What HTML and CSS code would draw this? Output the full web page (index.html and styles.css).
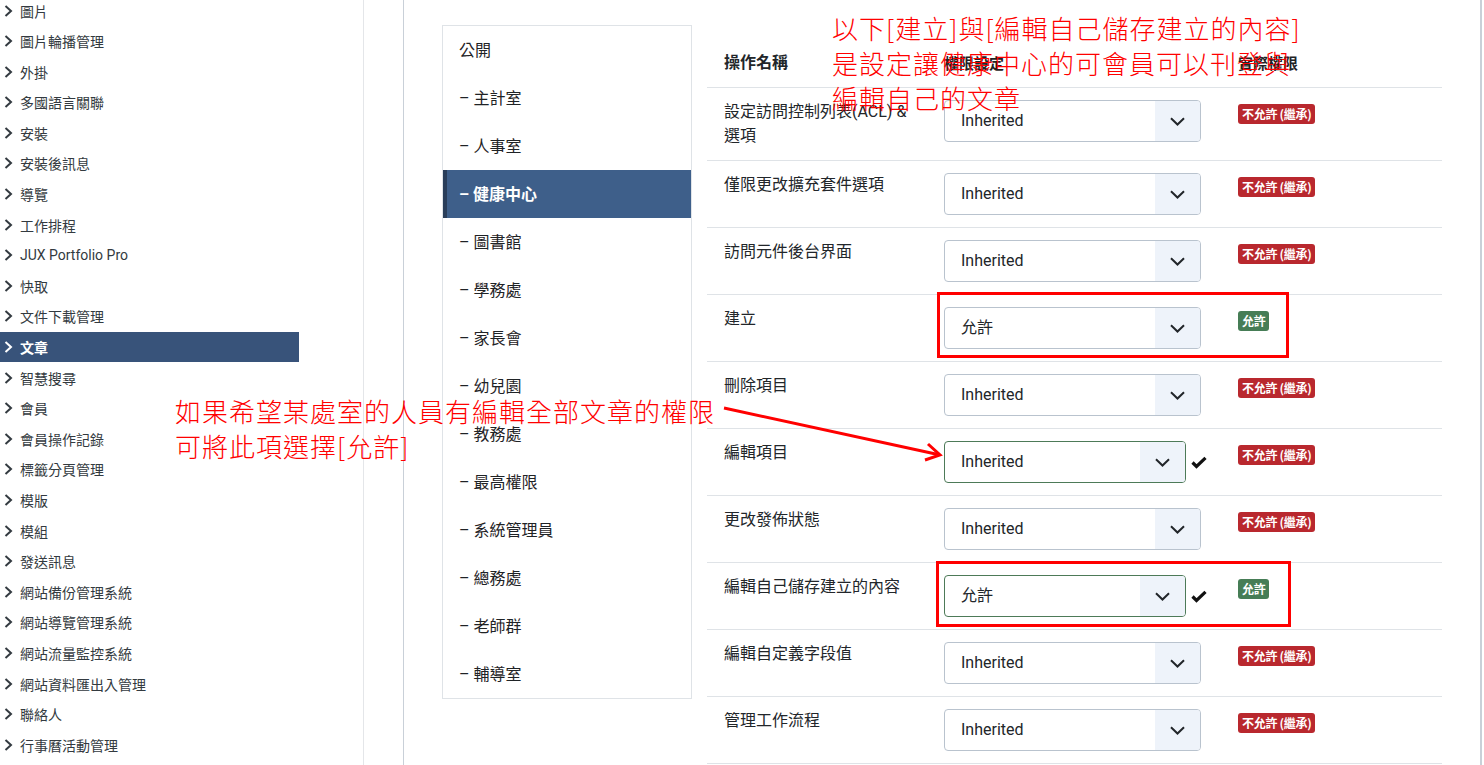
FILE: index.html
```html
<!DOCTYPE html>
<html lang="zh-Hant">
<head>
  <meta charset="UTF-8">
  <title>權限設定</title>
  <link rel="stylesheet" href="styles.css">
</head>
<body>

  <div class="page">

    <!-- Component menu on the left -->
    <aside class="sidebar">
      <ul class="menu">
        <li><span class="chev"></span>圖片</li>
        <li><span class="chev"></span>圖片輪播管理</li>
        <li><span class="chev"></span>外掛</li>
        <li><span class="chev"></span>多國語言關聯</li>
        <li><span class="chev"></span>安裝</li>
        <li><span class="chev"></span>安裝後訊息</li>
        <li><span class="chev"></span>導覽</li>
        <li><span class="chev"></span>工作排程</li>
        <li><span class="chev"></span>JUX Portfolio Pro</li>
        <li><span class="chev"></span>快取</li>
        <li><span class="chev"></span>文件下載管理</li>
        <li class="active"><span class="chev"></span>文章</li>
        <li><span class="chev"></span>智慧搜尋</li>
        <li><span class="chev"></span>會員</li>
        <li><span class="chev"></span>會員操作記錄</li>
        <li><span class="chev"></span>標籤分頁管理</li>
        <li><span class="chev"></span>模版</li>
        <li><span class="chev"></span>模組</li>
        <li><span class="chev"></span>發送訊息</li>
        <li><span class="chev"></span>網站備份管理系統</li>
        <li><span class="chev"></span>網站導覽管理系統</li>
        <li><span class="chev"></span>網站流量監控系統</li>
        <li><span class="chev"></span>網站資料匯出入管理</li>
        <li><span class="chev"></span>聯絡人</li>
        <li><span class="chev"></span>行事曆活動管理</li>
      </ul>
    </aside>

    <main class="content">

      <!-- User groups -->
      <ul class="groups">
        <li>公開</li>
        <li>– 主計室</li>
        <li>– 人事室</li>
        <li class="active">– 健康中心</li>
        <li>– 圖書館</li>
        <li>– 學務處</li>
        <li>– 家長會</li>
        <li>– 幼兒園</li>
        <li>– 教務處</li>
        <li>– 最高權限</li>
        <li>– 系統管理員</li>
        <li>– 總務處</li>
        <li>– 老師群</li>
        <li>– 輔導室</li>
      </ul>

      <!-- Permission table -->
      <div class="perms">
        <div class="row head">
          <div class="cell name">操作名稱</div>
          <div class="cell">權限設定</div>
          <div class="cell">實際權限</div>
        </div>

        <div class="row">
          <div class="cell name">設定訪問控制列表(ACL) &amp;<br>選項</div>
          <div class="cell"><div class="select"><span class="value">Inherited</span><span class="arrow-box"></span></div></div>
          <div class="cell"><span class="badge deny">不允許 (繼承)</span></div>
        </div>

        <div class="row">
          <div class="cell name">僅限更改擴充套件選項</div>
          <div class="cell"><div class="select"><span class="value">Inherited</span><span class="arrow-box"></span></div></div>
          <div class="cell"><span class="badge deny">不允許 (繼承)</span></div>
        </div>

        <div class="row">
          <div class="cell name">訪問元件後台界面</div>
          <div class="cell"><div class="select"><span class="value">Inherited</span><span class="arrow-box"></span></div></div>
          <div class="cell"><span class="badge deny">不允許 (繼承)</span></div>
        </div>

        <div class="row">
          <div class="cell name">建立</div>
          <div class="cell"><div class="select"><span class="value">允許</span><span class="arrow-box"></span></div></div>
          <div class="cell"><span class="badge allow">允許</span></div>
        </div>

        <div class="row">
          <div class="cell name">刪除項目</div>
          <div class="cell"><div class="select"><span class="value">Inherited</span><span class="arrow-box"></span></div></div>
          <div class="cell"><span class="badge deny">不允許 (繼承)</span></div>
        </div>

        <div class="row">
          <div class="cell name">編輯項目</div>
          <div class="cell saved"><div class="select valid"><span class="value">Inherited</span><span class="arrow-box"></span></div><span class="check"></span></div>
          <div class="cell"><span class="badge deny">不允許 (繼承)</span></div>
        </div>

        <div class="row">
          <div class="cell name">更改發佈狀態</div>
          <div class="cell"><div class="select"><span class="value">Inherited</span><span class="arrow-box"></span></div></div>
          <div class="cell"><span class="badge deny">不允許 (繼承)</span></div>
        </div>

        <div class="row">
          <div class="cell name">編輯自己儲存建立的內容</div>
          <div class="cell saved"><div class="select valid"><span class="value">允許</span><span class="arrow-box"></span></div><span class="check"></span></div>
          <div class="cell"><span class="badge allow">允許</span></div>
        </div>

        <div class="row">
          <div class="cell name">編輯自定義字段值</div>
          <div class="cell"><div class="select"><span class="value">Inherited</span><span class="arrow-box"></span></div></div>
          <div class="cell"><span class="badge deny">不允許 (繼承)</span></div>
        </div>

        <div class="row">
          <div class="cell name">管理工作流程</div>
          <div class="cell"><div class="select"><span class="value">Inherited</span><span class="arrow-box"></span></div></div>
          <div class="cell"><span class="badge deny">不允許 (繼承)</span></div>
        </div>
      </div>

    </main>
  </div>

  <!-- Red annotations drawn over the screenshot -->
  <div class="note note-top">以下[建立]與[編輯自己儲存建立的內容]<br>是設定讓健康中心的可會員可以刊登與<br>編輯自己的文章</div>
  <div class="note note-left">如果希望某處室的人員有編輯全部文章的權限<br>可將此項選擇[允許]</div>

  <div class="mark mark-create"></div>
  <div class="mark mark-own"></div>

  <svg class="pointer" width="1484" height="765" viewBox="0 0 1484 765">
    <line x1="724" y1="408" x2="938" y2="454.5" stroke="#ff0000" stroke-width="3"/>
    <polyline points="928,444 940,455 925,460" fill="none" stroke="#ff0000" stroke-width="3"/>
  </svg>

</body>
</html>
```

FILE: styles.css
```css
html, body {
  margin: 0;
  padding: 0;
  height: 100%;
  background-color: #ffffff;
  font-family: Roboto, "Noto Sans CJK TC", sans-serif;
  color: #22262a;
  overflow: hidden;
}

ul {
  list-style: none;
  margin: 0;
  padding: 0;
}

.page {
  display: flex;
  height: 765px;
}

/* Left component menu */
.sidebar {
  width: 363px;
  flex-shrink: 0;
  border-right: 1px solid #e4e6e9;
  overflow: hidden;
}

.menu {
  width: 299px;
  margin-top: -4.8px;
}

.menu li {
  height: 30.6px;
  display: flex;
  align-items: center;
  font-size: 14px;
  color: #333a40;
}

.menu li.active {
  background-color: #38537a;
  color: #ffffff;
  font-weight: bold;
}

.chev {
  width: 20px;
  height: 12px;
  flex-shrink: 0;
  background: no-repeat 4px 0 / 9px 12px;
  background-image: url("data:image/svg+xml,%3Csvg xmlns='http://www.w3.org/2000/svg' viewBox='0 0 9 12'%3E%3Cpath d='M1.5 1 L7 6 L1.5 11' fill='none' stroke='%23333a40' stroke-width='2'/%3E%3C/svg%3E");
}

.menu li.active .chev {
  background-image: url("data:image/svg+xml,%3Csvg xmlns='http://www.w3.org/2000/svg' viewBox='0 0 9 12'%3E%3Cpath d='M1.5 1 L7 6 L1.5 11' fill='none' stroke='%23ffffff' stroke-width='2'/%3E%3C/svg%3E");
}

/* Main area */
.content {
  margin-left: 39px;
  width: 1038px;
  border-left: 1px solid #c9d0d8;
  border-right: 2px solid #c9d0d8;
  padding: 25px 0 0 38px;
  display: flex;
  align-items: flex-start;
  gap: 15px;
}

.groups {
  width: 248px;
  border: 1px solid #dfe3e7;
}

.groups li {
  height: 48px;
  box-sizing: border-box;
  padding-bottom: 3px;
  display: flex;
  align-items: center;
  padding-left: 16px;
  font-size: 16px;
  color: #1f2326;
}

.groups li.active {
  background-color: #3e5f8a;
  color: #ffffff;
  font-weight: bold;
  border-left: 4px solid #2a3e5a;
  padding-left: 12px;
}

/* Permission table */
.perms {
  width: 735px;
  margin-top: 13px;
}

.row {
  display: grid;
  grid-template-columns: 237px 294px 1fr;
  border-bottom: 1px solid #dfe3e7;
}

.row.head {
  height: 49px;
  align-items: center;
  font-size: 15px;
  font-weight: bold;
  color: #1f2326;
}

.row:not(.head) .cell {
  padding: 12px 0;
  min-height: 42px;
}

.cell.name {
  padding-left: 17px !important;
  font-size: 16px;
  line-height: 24px;
  color: #22262a;
}

.saved {
  display: flex;
  align-items: center;
}

.select {
  width: 257px;
  height: 42px;
  box-sizing: border-box;
  display: flex;
  border: 1px solid #b9c3ce;
  border-radius: 4px;
  overflow: hidden;
  background-color: #ffffff;
}

.select.valid {
  width: 242px;
  border-color: #4d7a58;
}

.value {
  flex: 1;
  padding-left: 16px;
  line-height: 40px;
  font-size: 16px;
  color: #22262a;
}

.arrow-box {
  width: 45px;
  background: #eef3fa no-repeat center / 15px 9px;
  background-image: url("data:image/svg+xml,%3Csvg xmlns='http://www.w3.org/2000/svg' viewBox='0 0 15 9'%3E%3Cpath d='M1 1.2 L7.5 7.5 L14 1.2' fill='none' stroke='%2322262a' stroke-width='2'/%3E%3C/svg%3E");
}

.check {
  width: 16px;
  height: 13px;
  margin-left: 5px;
  background: no-repeat center / 16px 13px;
  background-image: url("data:image/svg+xml,%3Csvg xmlns='http://www.w3.org/2000/svg' viewBox='0 0 16 13'%3E%3Cpath d='M1.5 6.5 L5.5 10.5 L14.5 1.8' fill='none' stroke='%23111' stroke-width='3.2'/%3E%3C/svg%3E");
}

.badge {
  display: inline-block;
  margin-top: 4px;
  height: 20px;
  line-height: 20px;
  padding: 0 4px;
  border-radius: 3px;
  font-family: "Noto Sans CJK TC", sans-serif;
  font-size: 12px;
  font-weight: bold;
  color: #ffffff;
  letter-spacing: -0.3px;
}

.badge.deny {
  background-color: #b9282e;
}

.badge.allow {
  background-color: #467d56;
}

/* Red notes over the screenshot */
.note {
  position: absolute;
  font-family: "Noto Sans CJK TC", sans-serif;
  font-weight: 300;
  font-size: 26px;
  letter-spacing: 1px;
  line-height: 35px;
  color: #ff0000;
  white-space: nowrap;
}

.note-top {
  left: 832px;
  top: 10px;
}

.note-left {
  left: 175px;
  top: 393px;
}

.mark {
  position: absolute;
  border: 3px solid #ff0000;
  box-sizing: border-box;
}

.mark-create {
  left: 937px;
  top: 292px;
  width: 352px;
  height: 66px;
}

.mark-own {
  left: 936px;
  top: 561px;
  width: 355px;
  height: 66px;
}

.pointer {
  position: absolute;
  left: 0;
  top: 0;
  pointer-events: none;
}
```
